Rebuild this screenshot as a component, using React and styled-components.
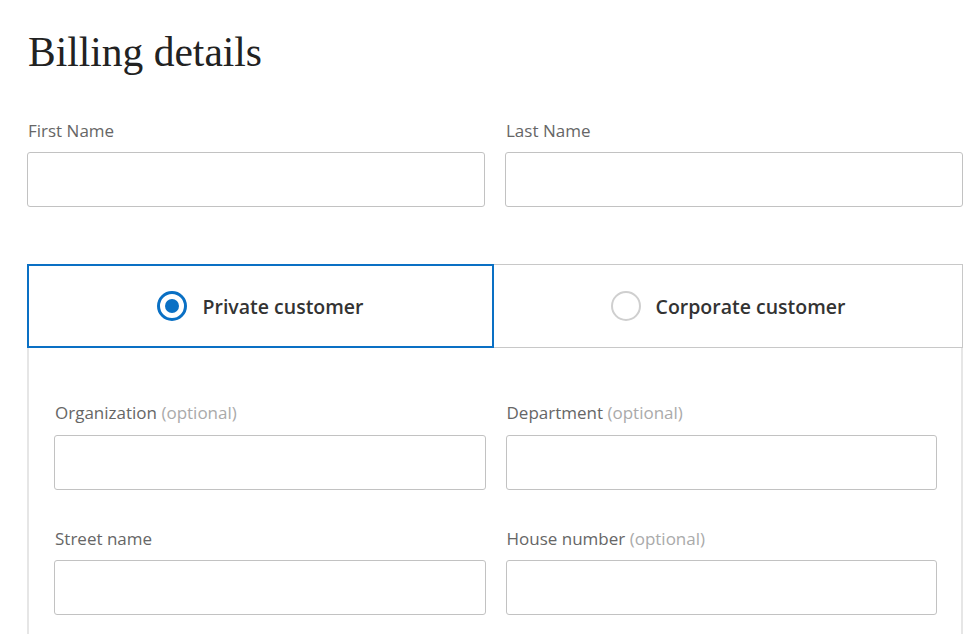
import React, { useState } from "react";
import styled, { createGlobalStyle, css } from "styled-components";

const Global = createGlobalStyle`
  html, body { margin: 0; padding: 0; background: #fff; }
  body { font-family: "Open Sans", Lato, sans-serif; }
  * { box-sizing: border-box; }
`;

const Page = styled.div`
  width: 975px;
  padding: 28px 12px 0 27px;
`;

const Title = styled.h1`
  margin: 0 0 44px 1px;
  font-family: "Liberation Serif", "DejaVu Serif", serif;
  font-weight: 400;
  font-size: 41.5px;
  line-height: 48px;
  color: #222;
`;

const Row = styled.div`
  display: grid;
  grid-template-columns: 1fr 1fr;
  column-gap: 20px;
  margin-bottom: ${(p) => p.$mb || 0}px;
`;

const Field = styled.div`
  display: flex;
  flex-direction: column;
`;

const Label = styled.label`
  display: block;
  margin: 0 0 ${(p) => p.$gap || 10}px 1px;
  font-family: "Open Sans", Lato, sans-serif;
  font-size: 17px;
  line-height: 22px;
  color: #666;
`;

const Optional = styled.span`
  color: #aaa;
`;

const Input = styled.input`
  height: 55px;
  width: 100%;
  border: 1px solid #c2c2c2;
  border-radius: 3px;
  background: #fff;
  padding: 0 12px;
  font: inherit;
  font-size: 16px;
  outline: none;
`;

const Tabs = styled.div`
  display: grid;
  grid-template-columns: 467px 1fr;
`;

const Tab = styled.button`
  height: 84px;
  display: flex;
  align-items: center;
  justify-content: center;
  gap: 15px;
  background: #fff;
  cursor: pointer;
  font-family: "Open Sans", Lato, sans-serif;
  font-size: 19.5px;
  font-weight: 600;
  color: #333;
  padding: 0;
  ${(p) =>
    p.$active
      ? css`
          border: 2px solid #0a70c4;
          position: relative;
          z-index: 1;
        `
      : css`
          border: 1px solid #c8c8c8;
          border-left: none;
        `}
`;

const Radio = styled.span`
  width: 30px;
  height: 30px;
  border-radius: 50%;
  flex: none;
  display: flex;
  align-items: center;
  justify-content: center;
  ${(p) =>
    p.$checked
      ? css`
          border: 3px solid #0a70c4;
          &::after {
            content: "";
            width: 14px;
            height: 14px;
            border-radius: 50%;
            background: #0a70c4;
          }
        `
      : css`
          border: 2px solid #cfcfcf;
        `}
`;

const Panel = styled.div`
  border-left: 2px solid #e6e6e6;
  border-right: 2px solid #e6e6e6;
  padding: 54px 24px 40px 25px;
`;

function LabeledInput({ label, optional, gap }) {
  return (
    <Field>
      <Label $gap={gap}>
        {label}
        {optional && <Optional> (optional)</Optional>}
      </Label>
      <Input type="text" />
    </Field>
  );
}

export default function App() {
  const [type, setType] = useState("private");
  return (
    <Page>
      <Global />
      <Title>Billing details</Title>
      <Row $mb={57}>
        <LabeledInput label="First Name" />
        <LabeledInput label="Last Name" />
      </Row>
      <Tabs>
        <Tab $active={type === "private"} onClick={() => setType("private")}>
          <Radio $checked={type === "private"} />
          Private customer
        </Tab>
        <Tab $active={type === "corporate"} onClick={() => setType("corporate")}>
          <Radio $checked={type === "corporate"} />
          Corporate customer
        </Tab>
      </Tabs>
      <Panel>
        <Row $mb={38}>
          <LabeledInput label="Organization" optional gap={11} />
          <LabeledInput label="Department" optional gap={11} />
        </Row>
        <Row>
          <LabeledInput label="Street name" gap={10} />
          <LabeledInput label="House number" optional gap={10} />
        </Row>
      </Panel>
    </Page>
  );
}
